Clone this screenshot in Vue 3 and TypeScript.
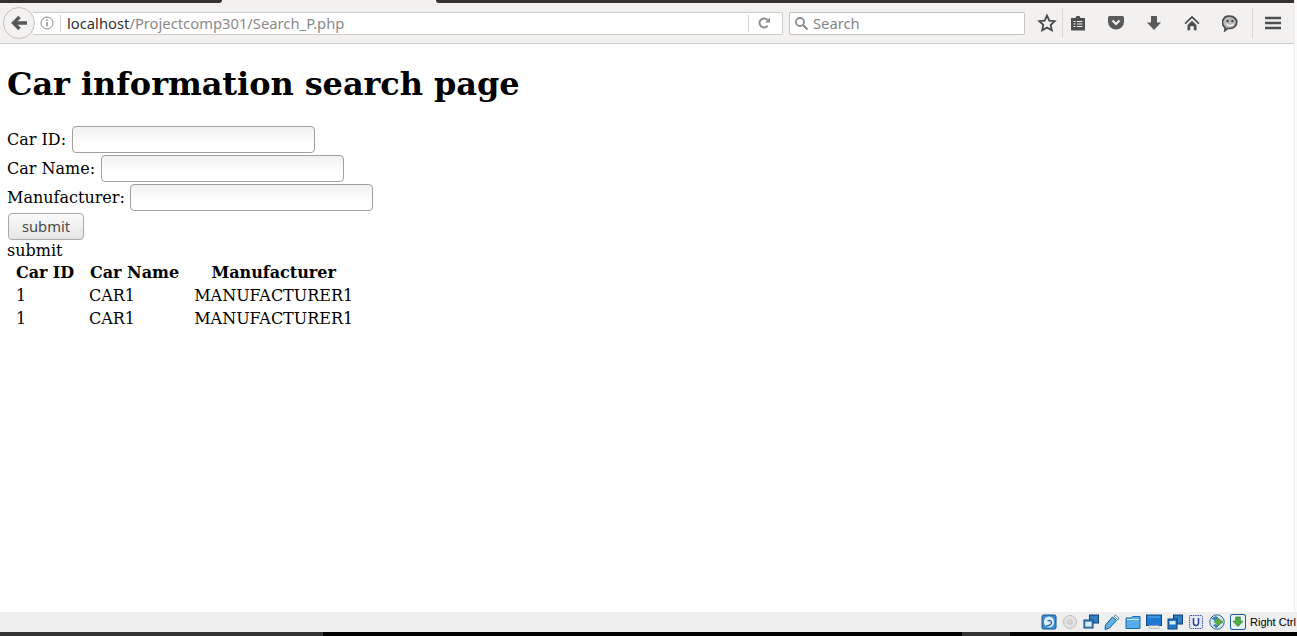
<script setup lang="ts">
const rows = [
  { id: 1, name: 'CAR1', maker: 'MANUFACTURER1' },
  { id: 1, name: 'CAR1', maker: 'MANUFACTURER1' },
]
</script>

<template>
  <div class="screen">
    <div class="tabstrip">
      <div class="tab-a"></div>
      <div class="tab-b"></div>
    </div>
    <header class="toolbar">
      <button class="back" aria-label="Back">
        <svg width="18" height="16" viewBox="0 0 18 16"><path d="M17 8H5M9.500 2 3.500 8l6 6" fill="none" stroke="#55595c" stroke-width="3.400"/></svg>
      </button>
      <div class="urlbar">
        <svg class="info" width="14" height="14" viewBox="0 0 14 14"><circle cx="7" cy="7" r="6" fill="none" stroke="#8b8b8b"/><rect x="6.300" y="6" width="1.400" height="4.400" fill="#8b8b8b"/><rect x="6.300" y="3.600" width="1.400" height="1.400" fill="#8b8b8b"/></svg>
        <span class="sep"></span>
        <span class="url"><span class="host">localhost</span>/Projectcomp301/Search_P.php</span>
        <span class="sep reload-sep"></span>
        <svg class="reload" width="14" height="14" viewBox="0 0 14 14"><path d="M10.600 9.600A4.500 4.500 0 1 1 10.400 4" fill="none" stroke="#8b9094" stroke-width="2"/><path d="M8 6.400h5V1.600z" fill="#8b9094"/></svg>
      </div>
      <div class="searchbar">
        <svg width="15" height="15" viewBox="0 0 15 15"><circle cx="6" cy="6" r="4" fill="none" stroke="#8a8e91" stroke-width="1.800"/><path d="m9 9 4.500 4.500" stroke="#8a8e91" stroke-width="2.200"/></svg>
        <span>Search</span>
      </div>
      <div class="tools">
        <svg class="star" width="20" height="20" viewBox="0 0 20 20"><path d="m10 2.600 2.300 5 5.400.6-4 3.700 1.100 5.400-4.800-2.700-4.800 2.700 1.100-5.400-4-3.700 5.400-.6z" fill="none" stroke="#4a4a4a" stroke-width="1.800"/></svg>
        <span class="tool-sep first"></span>
        <svg class="list" width="16" height="16" viewBox="0 0 16 16"><path d="M1 3h4.500l1-2h3l1 2H15v12.500H1z" fill="#505050"/><path d="M3.500 6.500h2M7 6.500h5.500M3.500 9h2M7 9h5.500M3.500 11.500h2M7 11.500h5.500" stroke="#f2f2f2"/></svg>
        <svg class="pocket" width="18" height="16" viewBox="0 0 18 16"><path d="M2.500 1h13A1.500 1.500 0 0 1 17 2.500V7a8 7.500 0 0 1-16 0V2.500A1.500 1.500 0 0 1 2.500 1z" fill="#5a5a5a"/><path d="m5.500 5.500 3.500 3.500 3.500-3.500" fill="none" stroke="#f2f2f2" stroke-width="2"/></svg>
        <svg class="down" width="16" height="16" viewBox="0 0 16 16"><path d="M5 1h6v6.500h4L8 15 1 7.500h4z" fill="#5a5a5a"/></svg>
        <svg class="home" width="16" height="16" viewBox="0 0 16 16"><path d="M8 .8.500 8l1 1.200L8 3.200l6.500 6 1-1.200zM3.500 10 8 5.800l4.500 4.200v5.200H9.800v-4H6.200v4H3.500z" fill="#4f4f4f"/></svg>
        <svg class="chat" width="16" height="17" viewBox="0 0 16 17"><path d="M8 1.200a6.600 6 0 0 1 0 12.300H5.500L2.800 15.600l.5-3A6.300 6.300 0 0 1 8 1.200z" fill="#b9b9b9" stroke="#4a4a4a" stroke-width="1.700"/><circle cx="5.600" cy="6" r="1.200" fill="#4a4a4a"/><circle cx="10.400" cy="6" r="1.200" fill="#4a4a4a"/><path d="M4.500 8.800c1.500 2.200 5.500 2.200 7 0" fill="none" stroke="#f2f2f2" stroke-width="1.400"/></svg>
        <span class="tool-sep second"></span>
        <svg class="menu" width="16" height="14" viewBox="0 0 16 14"><path d="M0 2h16M0 7h16M0 12h16" stroke="#4f4f4f" stroke-width="2.600"/></svg>
      </div>
    </header>

    <main class="page">
      <h1>Car information search page</h1>
      <form class="form" @submit.prevent>
        <div class="field"><label for="cid">Car ID:</label> <input id="cid" type="text" /></div>
        <div class="field"><label for="cname">Car Name:</label> <input id="cname" type="text" /></div>
        <div class="field"><label class="tight" for="cmaker">Manufacturer:</label> <input id="cmaker" type="text" /></div>
        <button class="submit" type="submit">submit</button>
      </form>
      <div class="echo">submit</div>
      <table>
        <thead>
          <tr><th>Car ID</th><th>Car Name</th><th>Manufacturer</th></tr>
        </thead>
        <tbody>
          <tr v-for="(r, i) in rows" :key="i"><td>{{ r.id }}</td><td>{{ r.name }}</td><td>{{ r.maker }}</td></tr>
        </tbody>
      </table>
    </main>

    <footer class="vbox">
      <div class="vbar">
        <svg width="16" height="16" viewBox="0 0 16 16"><rect x="1" y="1" width="14" height="14" rx="1.500" fill="#3d8fd6" stroke="#17508a"/><ellipse cx="8" cy="8" rx="5" ry="5.500" fill="#e3f0fa"/><path d="M5 12c3 0 6-1.500 5.500-4-.3-1.500-2.500-2-4-1" fill="none" stroke="#1f6bb0" stroke-width="1.400"/></svg>
        <svg width="16" height="16" viewBox="0 0 16 16"><circle cx="8" cy="8" r="6.500" fill="#e4e4e4" stroke="#bdbdbd"/><circle cx="8" cy="8" r="3" fill="#d2d2d2"/><circle cx="8" cy="8" r="1.400" fill="#f8f8f8" stroke="#adadad" stroke-width=".6"/></svg>
        <svg width="16" height="16" viewBox="0 0 16 16"><rect x="6.500" y="1" width="9" height="8" fill="#2f7fc4" stroke="#143f70"/><rect x="1" y="6" width="9" height="8" fill="#4e9ad6" stroke="#143f70"/><rect x="2.500" y="8" width="6" height="4.500" fill="#dcecf8"/></svg>
        <svg width="16" height="16" viewBox="0 0 16 16"><path d="M1 15.500l.5-4.500 7-8 4 3.500-7 7.500z" fill="#5fb3ec" stroke="#1d5d98"/><path d="m10 2 1.500-1 3.500 3-1 2z" fill="#eaf5fc" stroke="#1d5d98" stroke-width=".7"/></svg>
        <svg width="16" height="16" viewBox="0 0 16 16"><path d="M1 4V14.500h14V2.500H7.500L6 4z" fill="#53ade8" stroke="#1d6aa8"/><path d="M2 5.500h12" stroke="#cfe8f9"/></svg>
        <svg width="16" height="16" viewBox="0 0 16 16"><rect x=".5" y="1" width="15" height="10.500" fill="#1e78d0" stroke="#154f88"/><path d="M2 3h12" stroke="#69b1ef"/><rect x="3" y="11.500" width="10" height="3" fill="#e2e6ea" stroke="#9aa3ab" stroke-width=".6"/></svg>
        <svg width="16" height="16" viewBox="0 0 16 16"><rect x="6.500" y="1" width="9" height="9" fill="#2f7fc4" stroke="#143f70"/><rect x="1" y="5" width="9" height="10" fill="#1e78d0" stroke="#143f70"/><rect x="2.500" y="7" width="6" height="3.500" fill="#dcecf8"/></svg>
        <svg width="16" height="16" viewBox="0 0 16 16"><rect x="1.500" y="1.500" width="13" height="13" rx="1" fill="#dfe6f7" stroke="#4456a8" stroke-dasharray="1.500 .8"/><rect x="4" y="3.500" width="8" height="9" fill="#f4f6fc"/><path d="M5.500 4v5a2.500 2.500 0 0 0 5 0V4" fill="none" stroke="#2e3f94" stroke-width="1.600"/></svg>
        <svg width="16" height="16" viewBox="0 0 16 16"><circle cx="8" cy="8" r="7.200" fill="#d5e6f2" stroke="#33688f"/><path d="M2.500 4.500 7 2l2 2-3 3zM4 11l3 3 2-1-2-3z" fill="#3b82b6"/><path d="m8 3.500 6 4.500-6 4.500V10L5 8l3-2z" fill="#58ad3c" stroke="#2d7324" stroke-width=".5"/></svg>
        <svg width="16" height="16" viewBox="0 0 16 16"><rect x=".5" y=".5" width="15" height="15" rx="1.500" fill="#e8f1f8" stroke="#1d5d98"/><path d="M5.700 3h4.600v4.200H13L8 12.500 3 7.200h2.700z" fill="#4bb23f" stroke="#1e6a1e" stroke-width=".6"/></svg>
        <span class="hostkey">Right Ctrl</span>
      </div>
      <div class="taskbar">
        <span class="task-a"></span>
        <span class="task-b"></span>
      </div>
    </footer>
    <div class="edge"></div>
  </div>
</template>

<style>
html, body { margin: 0; background: #fff; overflow: hidden; }
</style>

<style scoped>
.screen {
  width: 1297px;
  height: 636px;
  display: flex;
  flex-direction: column;
  overflow: hidden;
  background: #fff;
  position: relative;
}
.edge {
  position: absolute;
  top: 0;
  right: 0;
  bottom: 24px;
  width: 3px;
  box-sizing: border-box;
  background: #fbfbfb;
  border-left: 1px solid #f0f0f0;
}
.tabstrip {
  height: 3px;
  background: #f2f1f0;
  display: flex;
  flex: none;
}
.tab-a {
  width: 222px;
  background: #333230;
  border-bottom-right-radius: 6px;
}
.tab-b {
  margin-left: 214px;
  flex: 1;
  background: #333230;
  border-bottom-left-radius: 6px;
}
.toolbar {
  height: 41px;
  flex: none;
  box-sizing: border-box;
  background: #f2f1f0;
  border-bottom: 1px solid #cfcdca;
  display: flex;
  align-items: center;
  padding: 0 0 0 3px;
  font-family: "Noto Sans", "Open Sans", sans-serif;
}
.back {
  width: 32px;
  height: 32px;
  flex: none;
  box-sizing: border-box;
  border-radius: 50%;
  border: 1px solid #c4c2bf;
  background: #f4f3f2;
  padding: 0;
  display: flex;
  align-items: center;
  justify-content: center;
  position: relative;
  z-index: 1;
}
.urlbar {
  margin-left: -2px;
  width: 750px;
  height: 23px;
  box-sizing: border-box;
  border: 1px solid #cfcdca;
  border-left: 0;
  border-radius: 0 2px 2px 0;
  background: #fff;
  display: flex;
  align-items: center;
  padding-left: 7px;
  flex: none;
}
.sep {
  width: 1px;
  height: 17px;
  background: #d4d2cf;
  margin-left: 6px;
  flex: none;
}
.url {
  margin-left: 6px;
  font-size: 14.770px;
  color: #8a8a8a;
  white-space: nowrap;
  flex: 1;
}
.host { color: #333; }
.reload-sep { margin: 0 8px 0 0; }
.reload { margin-right: 11px; }
.searchbar {
  margin-left: 6px;
  width: 236px;
  height: 23px;
  box-sizing: border-box;
  border: 1px solid #c5c3c0;
  border-radius: 2px;
  background: #fff;
  display: flex;
  align-items: center;
  padding-left: 4px;
  gap: 4px;
  color: #858585;
  font-size: 14.770px;
  flex: none;
}
.tools {
  flex: 1;
  height: 100%;
  display: flex;
  align-items: center;
}
.tools svg { flex: none; }
.tool-sep { width: 1px; height: 30px; background: #d9d7d4; flex: none; }
.star { margin-left: 12px; }
.tool-sep.first { margin-left: 5px; }
.list { margin-left: 7px; }
.pocket { margin-left: 21px; }
.down { margin-left: 21px; }
.home { margin-left: 22px; }
.chat { margin-left: 22px; }
.tool-sep.second { margin-left: 14px; }
.menu { margin-left: 12px; }

.page {
  flex: 1;
  min-height: 0;
  padding: 0 7px;
  font-family: "DejaVu Serif", serif;
  font-size: 16px;
  color: #000;
  line-height: 19px;
}
h1 {
  margin: 21px 0 22px;
  font-size: 32px;
  line-height: 38px;
  font-weight: 700;
  letter-spacing: -0.075px;
}
.form { display: flex; flex-direction: column; align-items: flex-start; }
.field { height: 29px; display: flex; align-items: center; white-space: pre; }
.field label { margin-right: 6px; }
.field label.tight { margin-right: 5px; }
.field input {
  width: 243px;
  height: 27px;
  box-sizing: border-box;
  border: 1px solid #a0a0a0;
  border-radius: 4px;
  background: linear-gradient(#f1f1f1, #fff 65%);
  padding: 0 4px;
}
.submit {
  width: 76px;
  height: 27px;
  margin: 1px 0 0 1px;
  box-sizing: border-box;
  border: 1px solid #aaa;
  border-radius: 4px;
  background: linear-gradient(#fbfbfb, #e5e5e5);
  font-family: "Noto Sans", sans-serif;
  font-size: 14.770px;
  color: #4a4a4a;
  padding: 0 0 1px;
}
.echo { height: 20px; line-height: 20px; margin-top: 1px; }
table { border-collapse: separate; border-spacing: 2px 2px; margin-top: -1px; }
th { font-weight: 700; padding: 1px 7px; height: 19px; line-height: 19px; }
th:nth-child(1) { letter-spacing: -0.08px; }
th:nth-child(2) { padding-right: 6px; }
td { padding: 1px 7px; height: 19px; line-height: 19px; }
td:nth-child(2) { text-indent: -1px; }

.vbox { flex: none; }
.vbar {
  height: 20px;
  background: #efefef;
  display: flex;
  align-items: center;
  justify-content: flex-end;
  gap: 5px;
  font-family: "Liberation Sans", sans-serif;
  font-size: 11px;
  color: #000;
}
.vbar svg { flex: none; }
.hostkey { margin-left: -1px; white-space: nowrap; width: 47px; }
.taskbar {
  height: 4px;
  background: #000;
  position: relative;
}
.taskbar span { position: absolute; top: 0; height: 4px; background: #333; }
.task-a { left: 0; width: 323px; }
.task-b { left: 962px; width: 48px; }
</style>
